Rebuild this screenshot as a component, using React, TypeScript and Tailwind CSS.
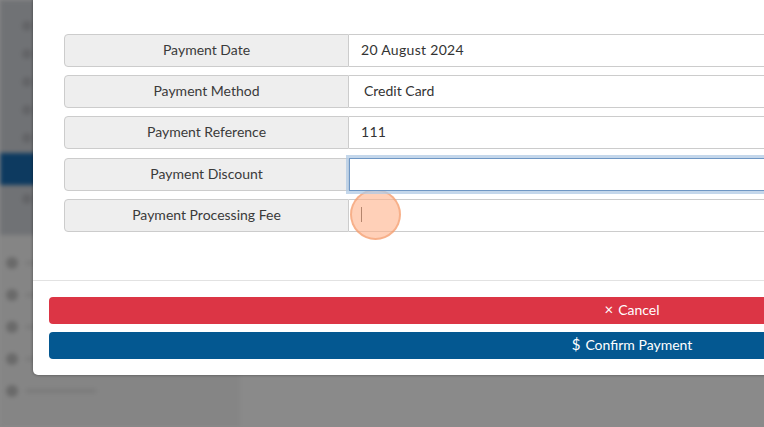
import React from "react";

type T_Row = {
  label: string;
  value?: string;
  focused?: boolean;
  caret?: boolean;
  select?: boolean;
};

const rows: T_Row[] = [
  { label: "Payment Date", value: "20 August 2024" },
  { label: "Payment Method", value: "Credit Card", select: true },
  { label: "Payment Reference", value: "111" },
  { label: "Payment Discount", focused: true },
  { label: "Payment Processing Fee", caret: true },
];

const FieldRow: React.FunctionComponent<{ row: T_Row }> = ({ row }) => {
  return (
    <div className={row.focused ? "flex h-[33px] mt-[1px]" : "flex h-[33px]"}>
      <div className="w-[285px] shrink-0 flex items-center justify-center pb-[2px] bg-[#eeeeee] border border-[#cccccc] rounded-l-[4px] text-[14px] text-[#3a3a3a]">
        {row.label}
      </div>
      <div
        className={
          row.focused
            ? "relative flex-1 flex items-center bg-white border border-[#6f97c4] shadow-[0_0_0_3px_rgba(176,202,228,0.75)] z-10"
            : "relative flex-1 flex items-center pb-[2px] bg-white border border-l-0 border-[#cccccc]"
        }
      >
        {row.value && (
          <span
            className={
              row.select
                ? "pl-[15px] text-[14px] text-[#333333]"
                : "pl-[12px] text-[14px] text-[#333333] tracking-[0.3px]"
            }
          >
            {row.value}
          </span>
        )}
        {row.caret && (
          <>
            <span className="ml-[12px] w-px h-[15px] bg-[#444444]" />
            {/* click marker */}
            <span className="absolute left-[1px] top-[-11px] w-[51px] h-[51px] rounded-full bg-[rgba(255,176,136,0.6)] border-2 border-[rgba(240,150,100,0.55)]" />
          </>
        )}
      </div>
    </div>
  );
};

const App: React.FunctionComponent = () => {
  return (
    <div
      className="relative w-[764px] h-[427px] overflow-hidden bg-[#8a8a8a]"
      style={{ fontFamily: "Lato, 'Open Sans', sans-serif" }}
    >
      {/* blurred page behind the modal */}
      <div className="flex h-full blur-[2px]">
        <div className="w-[240px] flex flex-col">
          <div className="h-[235px] bg-[#707275] flex flex-col pt-[12px]">
            {[0, 1, 2, 3, 4].map((i) => (
              <div key={i} className="h-[28px] flex items-center pl-[22px]">
                <span className="w-[10px] h-[10px] rounded-full bg-[#636467]" />
              </div>
            ))}
            <div className="h-[32px] bg-[#0d3a60] mt-[1px]" />
            <div className="h-[28px] flex items-center pl-[22px]">
              <span className="w-[10px] h-[10px] rounded-full bg-[#636467]" />
            </div>
          </div>
          <div className="flex-1 bg-[#858585] flex flex-col gap-[20px] pt-[22px] pl-[6px]">
            {[0, 1, 2, 3, 4].map((i) => (
              <div key={i} className="flex items-center gap-[8px]">
                <span className="w-[12px] h-[12px] rounded-full bg-[#6a6a6a]" />
                <span className="w-[70px] h-[4px] bg-[#7a7a7a]" />
              </div>
            ))}
          </div>
        </div>
        <div className="flex-1 bg-[#8a8a8a]" />
      </div>

      {/* modal */}
      <div className="absolute left-[33px] top-[-20px] w-[1198px] h-[395px] bg-white rounded-b-[5px] shadow-[0_0_3px_rgba(0,0,0,0.45)] flex flex-col">
        <div className="pt-[54px] pl-[31px] pr-[31px] pb-[48px] flex flex-col gap-[8px]">
          {rows.map((row) => (
            <FieldRow key={row.label} row={row} />
          ))}
        </div>
        <div className="border-t border-[#e2e2e2] px-[16px] pt-[16px] pb-[16px] flex flex-col gap-[8px]">
          <button className="h-[27px] w-full rounded-[4px] bg-[#dc3545] text-white text-[14px] flex items-center justify-center gap-[5px] pb-[3px]">
            <span className="text-[15px] leading-none">×</span>
            <span>Cancel</span>
          </button>
          <button className="h-[27px] w-full rounded-[4px] bg-[#045891] text-white text-[14px] flex items-center justify-center gap-[5px] pb-[3px]">
            <span className="text-[15px] leading-none">$</span>
            <span>Confirm Payment</span>
          </button>
        </div>
      </div>
    </div>
  );
};

export default App;
